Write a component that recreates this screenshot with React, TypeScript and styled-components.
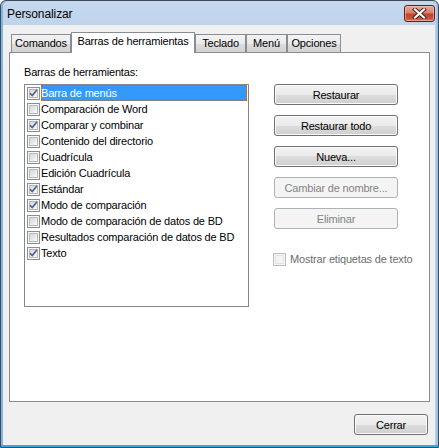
import React from "react";
import styled, { createGlobalStyle, css } from "styled-components";

const Global = createGlobalStyle`
  html, body { margin: 0; padding: 0; background: #ffffff; }
  body { font-family: "Liberation Sans", Arial, sans-serif; font-size: 11px; letter-spacing: -0.18px; }
  * { box-sizing: border-box; }
`;

const Window = styled.div`
  width: 439px;
  height: 448px;
  border: 1px solid #3f4b59;
  border-radius: 6px 6px 0 0;
  background: linear-gradient(#c4d8ee, #b9cfe9 60px, #b9cfe9);
  box-shadow: inset 0 -2px 0 #3aa6da, inset 2px 0 0 #7fb6e2, inset -2px 0 0 #9cc4e8;
  display: flex;
  flex-direction: column;
  overflow: hidden;
`;

const TitleBar = styled.div`
  height: 24px;
  display: flex;
  align-items: flex-start;
  padding: 0 3px 0 6px;
`;

const Title = styled.div`
  font-size: 12px;
  letter-spacing: -0.1px;
  color: #000;
  line-height: 14px;
  margin-top: 6px;
`;

const CloseButton = styled.div`
  margin-left: auto;
  margin-top: 4px;
  width: 31px;
  height: 17px;
  border: 1px solid #5a2118;
  border-radius: 3px;
  background: linear-gradient(#e9a797 0%, #d8806c 45%, #c2432a 55%, #c9553a 85%, #dc7f5c 100%);
  box-shadow: inset 0 0 0 1px rgba(255, 220, 210, 0.45);
  display: flex;
  align-items: center;
  justify-content: center;
`;

const Client = styled.div`
  flex: 1;
  margin: 0 3px 2px 2px;
  background: #f0f0f0;
  padding: 7px 0 0 6px;
  display: flex;
  flex-direction: column;
`;

const TabStrip = styled.div`
  display: flex;
  align-items: flex-end;
  height: 20px;
  padding-left: 2px;
  position: relative;
  z-index: 1;
`;

const Tab = styled.div<{ $w: number; $active?: boolean }>`
  width: ${(p) => p.$w}px;
  height: 18px;
  border: 1px solid #898c95;
  border-bottom: none;
  line-height: 17px;
  text-align: center;
  color: #000;
  white-space: nowrap;
  background: linear-gradient(#f3f3f3 0%, #ebebeb 50%, #dedede 50%, #d2d2d2 100%);
  ${(p) =>
    p.$active &&
    css`
      height: 21px;
      margin-bottom: -1px;
      background: #ffffff;
    `}
`;

const Panel = styled.div`
  width: 421px;
  height: 350px;
  border: 1px solid #898c95;
  background: #ffffff;
  padding: 13px 0 0 14px;
`;

const GroupLabel = styled.div`
  height: 13px;
  line-height: 13px;
  margin-bottom: 5px;
  color: #000;
`;

const Body = styled.div`
  display: flex;
  gap: 25px;
`;

const ListBox = styled.div`
  width: 225px;
  height: 223px;
  border: 1px solid #828790;
  background: #ffffff;
`;

const Row = styled.div`
  height: 16px;
  display: flex;
  align-items: center;
  padding-left: 2px;
`;

const RowLabel = styled.div<{ $selected?: boolean }>`
  flex: 1;
  height: 16px;
  line-height: 16px;
  margin: 0 1px 0 1px;
  padding-left: 0;
  color: #000;
  white-space: nowrap;
  ${(p) =>
    p.$selected &&
    css`
      background: #3399ff;
      color: #ffffff;
      outline: 1px dotted #cc6600;
      outline-offset: -1px;
    `}
`;

const Side = styled.div`
  display: flex;
  flex-direction: column;
`;

const ButtonColumn = styled.div`
  display: flex;
  flex-direction: column;
  gap: 10px;
  width: 124px;
`;

const Button = styled.div<{ $disabled?: boolean; $w?: number }>`
  width: ${(p) => (p.$w ? `${p.$w}px` : "100%")};
  height: 21px;
  border: 1px solid #707070;
  border-radius: 3px;
  background: linear-gradient(#f2f2f2 0%, #ebebeb 50%, #dddddd 50%, #cfcfcf 100%);
  box-shadow: inset 0 0 0 1px #fbfbfb;
  display: flex;
  align-items: center;
  justify-content: center;
  color: #000;
  white-space: nowrap;
  ${(p) =>
    p.$disabled &&
    css`
      border-color: #adb2b5;
      background: #f4f4f4;
      box-shadow: none;
      color: #838383;
    `}
`;

const OptionRow = styled.label<{ $disabled?: boolean }>`
  margin-top: 24px;
  margin-left: -1px;
  display: flex;
  align-items: center;
  gap: 4px;
  color: ${(p) => (p.$disabled ? "#6d6d6d" : "#000")};
  height: 13px;
  line-height: 13px;
`;

const Footer = styled.div`
  display: flex;
  justify-content: flex-end;
  margin-top: 12px;
  padding-right: 7px;
`;

const BoxOuter = styled.span<{ $disabled?: boolean }>`
  position: relative;
  flex: none;
  width: 13px;
  height: 13px;
  border: 1px solid ${(p) => (p.$disabled ? "#bcbcbc" : "#8e8f8f")};
  background: #f6f6f6;
  padding: 1px;
  display: block;
`;

const BoxInner = styled.span<{ $disabled?: boolean }>`
  display: block;
  width: 9px;
  height: 9px;
  border: 1px solid ${(p) => (p.$disabled ? "#e2e2e2" : "#b8bcc2")};
  background: ${(p) =>
    p.$disabled
      ? "#f4f4f4"
      : "linear-gradient(135deg, #d2d5da 0%, #e6e7e9 50%, #fafafa 100%)"};
`;

const CheckMark = styled.svg`
  position: absolute;
  left: 0;
  top: 0;
`;

function CheckBox({ checked, disabled }: { checked?: boolean; disabled?: boolean }) {
  return (
    <BoxOuter $disabled={disabled}>
      <BoxInner $disabled={disabled} />
      {checked && (
        <CheckMark width="11" height="11" viewBox="0 0 11 11">
          <path d="M2 5.2 L4.3 7.6 L9 1.8" fill="none" stroke="#4a6294" strokeWidth="1.6" />
        </CheckMark>
      )}
    </BoxOuter>
  );
}

const items: { label: string; checked: boolean }[] = [
  { label: "Barra de menús", checked: true },
  { label: "Comparación de Word", checked: false },
  { label: "Comparar y combinar", checked: true },
  { label: "Contenido del directorio", checked: false },
  { label: "Cuadrícula", checked: false },
  { label: "Edición Cuadrícula", checked: false },
  { label: "Estándar", checked: true },
  { label: "Modo de comparación", checked: true },
  { label: "Modo de comparación de datos de BD", checked: false },
  { label: "Resultados comparación de datos de BD", checked: false },
  { label: "Texto", checked: true },
];

const tabs = [
  { label: "Comandos", w: 60 },
  { label: "Barras de herramientas", w: 124, active: true },
  { label: "Teclado", w: 51 },
  { label: "Menú", w: 41 },
  { label: "Opciones", w: 54 },
];

export default function App() {
  return (
    <>
      <Global />
      <Window>
        <TitleBar>
          <Title>Personalizar</Title>
          <CloseButton>
            <svg width="15" height="11" viewBox="0 0 15 11">
              <path d="M3 1.5 L12 9.5 M12 1.5 L3 9.5" stroke="#4a1e16" strokeWidth="4" strokeLinecap="square" />
              <path d="M3 1.5 L12 9.5 M12 1.5 L3 9.5" stroke="#ffffff" strokeWidth="2.2" strokeLinecap="square" />
            </svg>
          </CloseButton>
        </TitleBar>
        <Client>
          <TabStrip>
            {tabs.map((t) => (
              <Tab key={t.label} $w={t.w} $active={t.active}>
                {t.label}
              </Tab>
            ))}
          </TabStrip>
          <Panel>
            <GroupLabel>Barras de herramientas:</GroupLabel>
            <Body>
              <ListBox>
                {items.map((it, i) => (
                  <Row key={it.label}>
                    <CheckBox checked={it.checked} />
                    <RowLabel $selected={i === 0}>{it.label}</RowLabel>
                  </Row>
                ))}
              </ListBox>
              <Side>
                <ButtonColumn>
                  <Button>Restaurar</Button>
                  <Button>Restaurar todo</Button>
                  <Button>Nueva...</Button>
                  <Button $disabled>Cambiar de nombre...</Button>
                  <Button $disabled>Eliminar</Button>
                </ButtonColumn>
                <OptionRow $disabled>
                  <CheckBox disabled />
                  Mostrar etiquetas de texto
                </OptionRow>
              </Side>
            </Body>
          </Panel>
          <Footer>
            <Button $w={74}>Cerrar</Button>
          </Footer>
        </Client>
      </Window>
    </>
  );
}
